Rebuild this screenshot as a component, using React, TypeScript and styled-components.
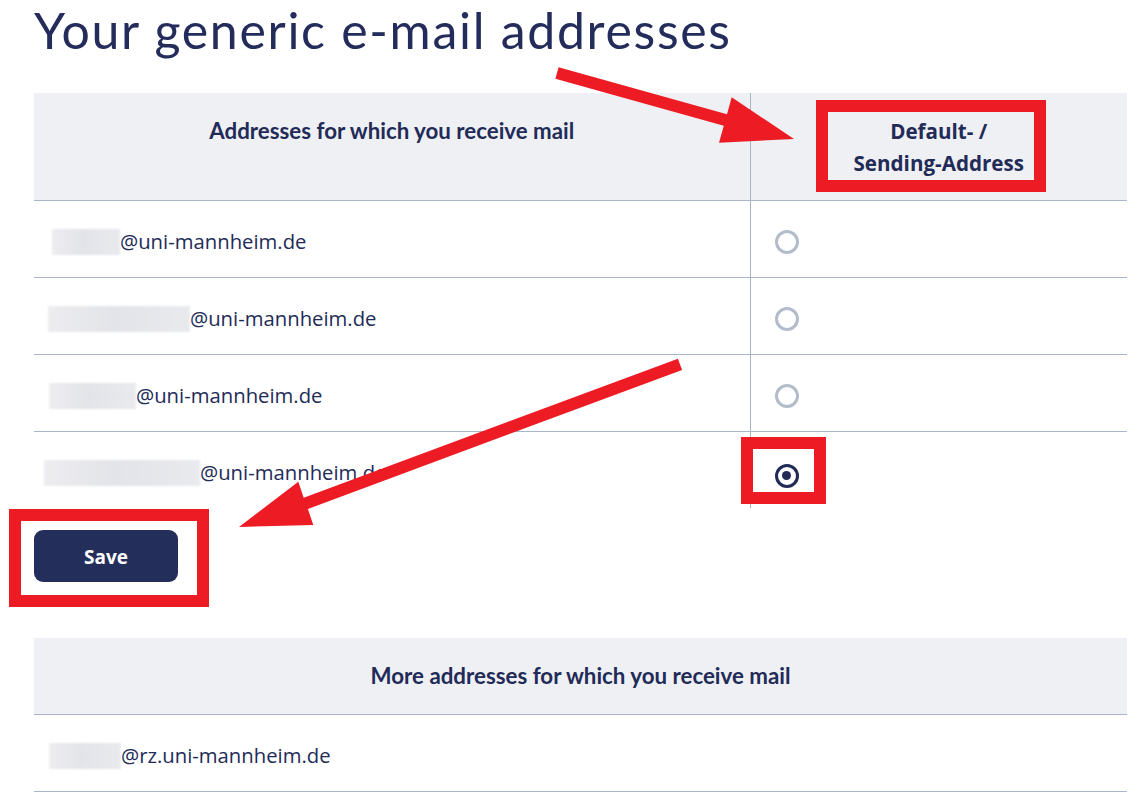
import { FC } from 'react';
import styled, { createGlobalStyle } from 'styled-components';

const GlobalStyle = createGlobalStyle`
  html, body {
    margin: 0;
    padding: 0;
    background: #ffffff;
  }
  body {
    font-family: 'Open Sans', 'Liberation Sans', sans-serif;
    color: #222b57;
  }
`;

const Page = styled.div`
  position: relative;
  width: 1138px;
  height: 803px;
  overflow: hidden;
  padding: 0 0 0 34px;
  box-sizing: border-box;
`;

const Title = styled.h1`
  margin: 0;
  padding-top: 2px;
  height: 93px;
  font-family: 'Lato', 'Open Sans', sans-serif;
  font-weight: 400;
  font-size: 50px;
  line-height: 56px;
  letter-spacing: 1.7px;
  color: #232c5a;
  box-sizing: border-box;
`;

const Table = styled.table`
  width: 1093px;
  border-collapse: collapse;
  table-layout: fixed;
`;

const HeadCell = styled.th<{ $divider?: boolean; $wide?: boolean }>`
  background: #eff0f4;
  height: ${(p) => (p.$wide ? 107 : 76)}px;
  padding: ${(p) => (p.$wide ? '22px 10px 0' : '0 10px')};
  vertical-align: ${(p) => (p.$wide ? 'top' : 'middle')};
  border-bottom: 1px solid #aab4c8;
  border-left: ${(p) => (p.$divider ? '1px solid #aab4c8' : 'none')};
  font-family: 'Lato', 'Open Sans', sans-serif;
  font-weight: 700;
  font-size: 22.3px;
  line-height: 31px;
  color: #222b57;
  text-align: center;
  box-sizing: border-box;
`;

const HeadAlt = styled.span`
  font-family: 'Open Sans', sans-serif;
  font-size: 20.6px;
  font-weight: 700;
`;

const Row = styled.tr<{ $last?: boolean }>`
  height: 77px;
  & > td {
    border-bottom: ${(p) => (p.$last ? 'none' : '1px solid #aab4c8')};
  }
`;

const AddressCell = styled.td`
  padding: 5px 0 0 10px;
  vertical-align: middle;
  font-size: 20.3px;
  color: #222b57;
  white-space: nowrap;
  box-sizing: border-box;
`;

const RadioCell = styled.td`
  padding: 11px 0 0 24px;
  vertical-align: middle;
  border-left: 1px solid #aab4c8;
  box-sizing: border-box;
`;

const Blur = styled.span<{ $w: number; $x: number }>`
  display: inline-block;
  vertical-align: middle;
  width: ${(p) => p.$w}px;
  height: 26px;
  margin-left: ${(p) => p.$x}px;
  margin-top: -3px;
  background: linear-gradient(90deg, #ededf0 0%, #e3e4e9 45%, #e9eaee 100%);
  filter: blur(1px);
`;

const Radio = styled.span<{ $checked?: boolean }>`
  display: inline-flex;
  align-items: center;
  justify-content: center;
  width: 24px;
  height: 24px;
  border-radius: 50%;
  border: 3.5px solid ${(p) => (p.$checked ? '#222b57' : '#b2bccb')};
  box-sizing: border-box;
  &::after {
    content: '';
    display: ${(p) => (p.$checked ? 'block' : 'none')};
    width: 9px;
    height: 9px;
    border-radius: 50%;
    background: #222b57;
  }
`;

const SaveButton = styled.button`
  display: block;
  margin: 22px 0 56px;
  width: 144px;
  height: 52px;
  padding-top: 2px;
  border: none;
  border-radius: 9px;
  background: #232e5a;
  color: #ffffff;
  font-family: 'Open Sans', sans-serif;
  font-weight: 700;
  font-size: 19px;
`;

const Overlay = styled.svg`
  position: absolute;
  left: 0;
  top: 0;
  pointer-events: none;
`;

const addresses = [
  { w: 68, x: 8, domain: '@uni-mannheim.de' },
  { w: 142, x: 4, domain: '@uni-mannheim.de' },
  { w: 87, x: 5, domain: '@uni-mannheim.de' },
  { w: 156, x: 0, domain: '@uni-mannheim.de' },
];

const RED = '#ed1c24';

const Annotations: FC = () => (
  <Overlay width={1138} height={803} viewBox="0 0 1138 803">
    <polygon
      fill={RED}
      points="558.6,67.2 727,114.2 731.7,97.3 794,139 719,142.7 723.8,125.8 555.4,78.8"
    />
    <polygon
      fill={RED}
      points="677.9,358.7 303.7,497.7 298.3,481.7 239,527 313.3,525 307.9,508.9 682.1,369.9"
    />
    <rect x={822} y={106} width={218} height={80} fill="none" stroke={RED} strokeWidth={12} />
    <rect x={747} y={443} width={73} height={55} fill="none" stroke={RED} strokeWidth={12} />
    <rect x={15} y={515} width={188} height={86} fill="none" stroke={RED} strokeWidth={12} />
  </Overlay>
);

export default function App() {
  return (
    <>
      <GlobalStyle />
      <Page>
        <Title>Your generic e-mail addresses</Title>
        <Table>
          <colgroup>
            <col style={{ width: 716 }} />
            <col style={{ width: 377 }} />
          </colgroup>
          <thead>
            <tr>
              <HeadCell $wide>Addresses for which you receive mail</HeadCell>
              <HeadCell $wide $divider>
                <HeadAlt>
                  Default- /<br />
                  Sending-Address
                </HeadAlt>
              </HeadCell>
            </tr>
          </thead>
          <tbody>
            {addresses.map((a, i) => (
              <Row key={i} $last={i === addresses.length - 1}>
                <AddressCell>
                  <Blur $w={a.w} $x={a.x} />
                  {a.domain}
                </AddressCell>
                <RadioCell>
                  <Radio $checked={i === addresses.length - 1} />
                </RadioCell>
              </Row>
            ))}
          </tbody>
        </Table>
        <SaveButton>Save</SaveButton>
        <Table>
          <thead>
            <tr>
              <HeadCell>More addresses for which you receive mail</HeadCell>
            </tr>
          </thead>
          <tbody>
            <Row>
              <AddressCell>
                <Blur $w={72} $x={5} />
                @rz.uni-mannheim.de
              </AddressCell>
            </Row>
          </tbody>
        </Table>
        <Annotations />
      </Page>
    </>
  );
}
